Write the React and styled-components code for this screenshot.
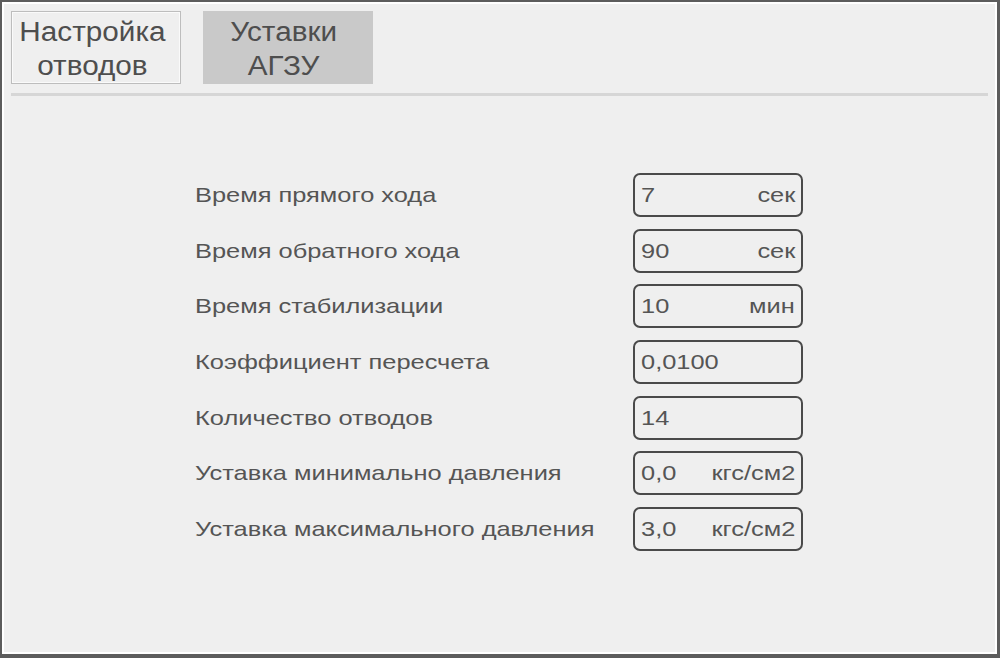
import React from "react";
import styled, { createGlobalStyle } from "styled-components";

const Global = createGlobalStyle`
  html, body { margin: 0; padding: 0; background: #efefef; }
  * { box-sizing: border-box; }
`;

const Frame = styled.div`
  width: 1000px;
  height: 658px;
  border-style: solid;
  border-color: #5c5c5c;
  border-width: 2px 3px 4px 2px;
  background: #efefef;
  font-family: "Liberation Sans", Arial, sans-serif;
  color: #555;
`;

const Inner = styled.div`
  height: 100%;
  border: 2px solid #ffffff;
  padding: 7px 7px 0 7px;
  display: flex;
  flex-direction: column;
`;

const TabBar = styled.div`
  display: flex;
  gap: 22px;
  padding-bottom: 9px;
  border-bottom: 3px solid #d6d6d6;
`;

const Tab = styled.div`
  width: 170px;
  height: 73px;
  display: flex;
  align-items: center;
  justify-content: center;
  padding: 2px 8px 0 0;
  text-align: center;
  font-size: 27px;
  line-height: 34px;
  color: #4e4e4e;
  background: ${(p) => (p.$active ? "#c9c9c9" : "#efefef")};
  border: ${(p) => (p.$active ? "none" : "1px solid #bdbdbd")};
  box-shadow: ${(p) => (p.$active ? "none" : "inset 0 0 0 1px #fafafa")};
`;

const TabText = styled.span`
  display: inline-block;
  transform: scaleX(1.1);
  transform-origin: center;
`;

const Form = styled.div`
  margin-top: 77px;
  margin-left: 184px;
  display: flex;
  flex-direction: column;
  gap: 11.7px;
`;

const Row = styled.div`
  display: flex;
  align-items: center;
  height: 44px;
`;

const Label = styled.div`
  width: 438px;
  font-size: 21px;
  color: #555;
`;

const Wide = styled.span`
  display: inline-block;
  white-space: nowrap;
  transform: scaleX(1.21);
  transform-origin: ${(p) => (p.$right ? "right" : "left")} center;
`;

const Field = styled.div`
  width: 170px;
  height: 44px;
  border: 2px solid #4a4a4a;
  border-radius: 7px;
  display: flex;
  align-items: center;
  justify-content: space-between;
  padding: 0 6px 0 6px;
  font-size: 21px;
  color: #555;
`;

const rows = [
  ["Время прямого хода", "7", "сек"],
  ["Время обратного хода", "90", "сек"],
  ["Время стабилизации", "10", "мин"],
  ["Коэффициент пересчета", "0,0100", ""],
  ["Количество отводов", "14", ""],
  ["Уставка минимально давления", "0,0", "кгс/см2"],
  ["Уставка максимального давления", "3,0", "кгс/см2"],
];

export default function App() {
  return (
    <>
      <Global />
      <Frame>
        <Inner>
          <TabBar>
            <Tab>
              <TabText>
                Настройка
                <br />
                отводов
              </TabText>
            </Tab>
            <Tab $active>
              <TabText>
                Уставки
                <br />
                АГЗУ
              </TabText>
            </Tab>
          </TabBar>
          <Form>
            {rows.map(([label, value, unit]) => (
              <Row key={label}>
                <Label>
                  <Wide>{label}</Wide>
                </Label>
                <Field>
                  <Wide>{value}</Wide>
                  {unit && <Wide $right>{unit}</Wide>}
                </Field>
              </Row>
            ))}
          </Form>
        </Inner>
      </Frame>
    </>
  );
}
